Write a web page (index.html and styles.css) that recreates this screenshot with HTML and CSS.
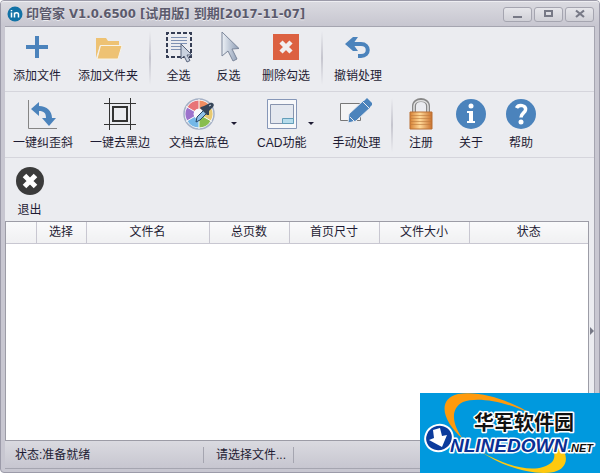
FILE: index.html
```html
<!DOCTYPE html>
<html lang="zh-CN">
<head>
    <meta charset="UTF-8">
    <meta name="viewport" content="width=device-width, initial-scale=1.0">
    <title>印管家</title>
    <link rel="stylesheet" href="styles.css">
</head>
<body>
    <div class="window">
        <header class="titlebar">
            <svg class="app-icon" width="16" height="16" viewBox="0 0 16 16">
                <circle cx="8" cy="8" r="7.5" fill="#1272a6"/>
                <path d="M4.500 6.500v5M4.500 4v1.300M7.500 11.500v-5M7.500 8.500c0-2.400 4-2.400 4 0v3" fill="none" stroke="#fff" stroke-width="1.500"/>
            </svg>
            <h1>印管家 V1.0.6500 [试用版] 到期[2017-11-07]</h1>
            <div class="window-buttons">
                <button type="button" aria-label="最小化"><svg width="10" height="10"><path d="M0 7h9v2H0z" fill="#777986"/></svg></button>
                <button type="button" aria-label="最大化"><svg width="10" height="10"><path d="M1 2h7v5H1z" fill="none" stroke="#777986" stroke-width="2"/></svg></button>
                <button type="button" aria-label="关闭"><svg width="10" height="10"><path d="M1 1.500l8 6.500M9 1.500L1 8" fill="none" stroke="#777986" stroke-width="2.200"/></svg></button>
            </div>
        </header>

        <main class="content">
            <nav class="toolbar">
                <!-- files and selection -->
                <div class="tool-row">
                    <button type="button" class="tool">
                        <svg width="32" height="32" viewBox="0 0 32 32"><path d="M14 5h4v9h9v4h-9v9h-4v-9H5v-4h9z" fill="#4b83bc"/></svg>
                        <span>添加文件</span>
                    </button>
                    <button type="button" class="tool">
                        <svg width="32" height="32" viewBox="0 0 32 32">
                            <path d="M4 7h10l2 3h11v4H8L4 27z" fill="#eec273"/>
                            <path d="M8.500 14.500H30L26 28H5z" fill="#eec273" stroke="#f7f3e8"/>
                        </svg>
                        <span>添加文件夹</span>
                    </button>
                    <i class="tool-sep"></i>
                    <button type="button" class="tool">
                        <svg width="32" height="32" viewBox="0 0 32 32">
                            <path d="M4 2h24v24H4z" fill="none" stroke="#353d54" stroke-width="2" stroke-dasharray="4 2" stroke-dashoffset="2"/>
                            <path d="M8 6.500h16M8 9.500h16M8 12.500h16M8 15.500h11M8 18.500h10" stroke="#7e91b3"/>
                            <path d="M18 13v15l3-3 3 6 3-1.500-3-5.500h5z" fill="#c9d2e0" stroke="#59647c"/>
                        </svg>
                        <span>全选</span>
                    </button>
                    <button type="button" class="tool">
                        <svg width="32" height="32" viewBox="0 0 32 32">
                            <defs><linearGradient id="cursorFill"><stop stop-color="#edf1f6"/><stop offset="1" stop-color="#8b9bb4"/></linearGradient></defs>
                            <path d="M9 1v24l6-5 5 10 4-2-5-10 7-.5z" fill="url(#cursorFill)" stroke="#7c879b"/>
                        </svg>
                        <span>反选</span>
                    </button>
                    <button type="button" class="tool">
                        <svg width="32" height="32" viewBox="0 0 32 32">
                            <path d="M3 3h26v26H3z" fill="#dc6141"/>
                            <path d="M11 11l10 10M21 11L11 21" stroke="#f1eff0" stroke-width="4.500"/>
                        </svg>
                        <span>删除勾选</span>
                    </button>
                    <i class="tool-sep"></i>
                    <button type="button" class="tool">
                        <svg width="32" height="32" viewBox="0 0 32 32">
                            <path d="M7 13h12c9 0 9 12 0 12h-3" fill="none" stroke="#4b83bc" stroke-width="4"/>
                            <path d="M3 13l8-7h5l-5 7 5 7h-5z" fill="#4b83bc"/>
                        </svg>
                        <span>撤销处理</span>
                    </button>
                </div>

                <!-- page processing -->
                <div class="tool-row tool-row-process">
                    <button type="button" class="tool">
                        <svg width="32" height="32" viewBox="0 0 32 32">
                            <path d="M1.500 2v28.500H30" fill="none" stroke="#858585"/>
                            <path d="M4 11l8-7v4c8 0 13 5 13 12h4l-7 8-7-8h4c0-5-2-7-7-7v5z" fill="#4b83bc"/>
                        </svg>
                        <span>一键纠歪斜</span>
                    </button>
                    <button type="button" class="tool">
                        <svg width="32" height="32" viewBox="0 0 32 32">
                            <path d="M5.500 0v32M26.500 0v32M0 5.500h32M0 26.500h32" stroke="#333"/>
                            <path d="M9 9h14v14H9z" fill="none" stroke="#333" stroke-width="2"/>
                        </svg>
                        <span>一键去黑边</span>
                    </button>
                    <button type="button" class="tool split">
                        <svg width="32" height="32" viewBox="0 0 32 32">
                            <circle cx="16" cy="16" r="15" fill="#f8f9fb" stroke="#a5b1c6" stroke-width="1.500"/>
                            <g fill="none" stroke-width="8">
                                <path d="M7.800 11.250A9.500 9.500 0 0 1 16 6.500" stroke="#e87578"/>
                                <path d="M16 6.500a9.500 9.500 0 0 1 8.200 4.750" stroke="#ef8d62"/>
                                <path d="M24.200 11.250a9.500 9.500 0 0 1 0 9.500" stroke="#e8c96f"/>
                                <path d="M24.200 20.750A9.500 9.500 0 0 1 16 25.500" stroke="#88bd4d"/>
                                <path d="M16 25.500a9.500 9.500 0 0 1-8.200-4.750" stroke="#74b8e8"/>
                                <path d="M7.800 20.750a9.500 9.500 0 0 1 0-9.500" stroke="#9d73cc"/>
                            </g>
                            <path d="M16 1v30M3 8.500l26 15M29 8.500l-26 15" stroke="#f8f9fb"/>
                            <circle cx="16" cy="16" r="5" fill="#f8f9fb"/>
                            <path d="M13 24l1-5 8-8 3 3-8 8z" fill="#8fc0e6" stroke="#244563"/>
                            <path d="M18 9l3-1 6-3c3-1 5 2 3 4l-4 4v4h-2l-7-7z" fill="#354458"/>
                            <path d="M26 8l2-1" stroke="#cbd5e0"/>
                        </svg>
                        <span>文档去底色</span>
                    </button>
                    <button type="button" class="tool split">
                        <svg width="32" height="32" viewBox="0 0 32 32">
                            <path d="M1.500 1.500h29v29h-29z" fill="#f7f8fa" stroke="#8697b8"/>
                            <path d="M4.500 6.500h23v19h-23z" fill="#e4e8ef" stroke="#8794ae"/>
                            <path d="M16.500 20.500h11v5h-11z" fill="#b6dcec" stroke="#649eb9"/>
                        </svg>
                        <span>CAD功能</span>
                    </button>
                    <button type="button" class="tool">
                        <svg width="32" height="32" viewBox="0 0 32 32">
                            <path d="M.5 5.500h20v17H.5z" fill="#f4f4f5" stroke="#777"/>
                            <path d="M8 25l1-9L24 2l7 7-15 14z" fill="#4b83bc" stroke="#ebecf0"/>
                            <path d="M24 3l3-3 6 6-3 3z" fill="#4b83bc"/>
                            <path d="M23 4l6 6" stroke="#ebecf0"/>
                            <path d="M10 19l4 4" stroke="#ebecf0"/>
                        </svg>
                        <span>手动处理</span>
                    </button>
                    <i class="tool-sep"></i>
                    <button type="button" class="tool">
                        <svg width="32" height="32" viewBox="0 0 32 32">
                            <defs><linearGradient id="lockFill"><stop stop-color="#d78235"/><stop offset=".45" stop-color="#ffd998"/><stop offset="1" stop-color="#ca702d"/></linearGradient></defs>
                            <path d="M9 17V8c0-8 14-8 14 0v9" fill="none" stroke="#888" stroke-width="4"/>
                            <path d="M9 17V8c0-7 14-7 14 0v9" fill="none" stroke="#e2e2e2" stroke-width="1.500"/>
                            <path d="M5 14h22v17H5z" fill="url(#lockFill)" stroke="#b97134"/>
                            <path d="M6 17.500h20M6 20.500h20M6 23.500h20M6 26.500h20" stroke="#bd7a3d" opacity=".6"/>
                        </svg>
                        <span>注册</span>
                    </button>
                    <button type="button" class="tool">
                        <svg width="32" height="32" viewBox="0 0 32 32">
                            <circle cx="16" cy="16" r="15" fill="#4b83bc"/>
                            <circle cx="16" cy="8" r="2.500" fill="#fff"/>
                            <path d="M12 13h6v10h2v2h-8v-2h2v-8h-2z" fill="#fff"/>
                        </svg>
                        <span>关于</span>
                    </button>
                    <button type="button" class="tool">
                        <svg width="32" height="32" viewBox="0 0 32 32">
                            <circle cx="16" cy="16" r="15" fill="#4b83bc"/>
                            <path d="M11.500 10c2-4 10-3 9 2-.5 3-4.500 3-4.500 7.500" fill="none" stroke="#fff" stroke-width="3.500"/>
                            <circle cx="16" cy="24" r="2.500" fill="#fff"/>
                        </svg>
                        <span>帮助</span>
                    </button>
                </div>

                <div class="tool-row tool-row-exit">
                    <button type="button" class="tool">
                        <svg width="32" height="32" viewBox="0 0 32 32">
                            <circle cx="16" cy="16" r="14" fill="#3b3b3b"/>
                            <path d="M10.500 10.500l11 11M21.500 10.500l-11 11" stroke="#fff" stroke-width="5"/>
                        </svg>
                        <span>退出</span>
                    </button>
                </div>
            </nav>

            <div class="workspace">
                <div class="file-list">
                    <table>
                        <colgroup>
                            <col class="col-mark"><col class="col-check"><col class="col-name"><col class="col-pages"><col class="col-size"><col class="col-size"><col>
                        </colgroup>
                        <thead>
                            <tr>
                                <th></th>
                                <th>选择</th>
                                <th>文件名</th>
                                <th>总页数</th>
                                <th>首页尺寸</th>
                                <th>文件大小</th>
                                <th>状态</th>
                            </tr>
                        </thead>
                        <tbody></tbody>
                    </table>
                </div>
                <div class="splitter"><svg width="4" height="8"><path d="M0 0l4 4-4 4z" fill="#777986"/></svg></div>
            </div>

            <footer class="statusbar">
                <span class="status-main">状态:准备就绪</span>
                <span class="status-file">请选择文件...</span>
            </footer>
        </main>
    </div>

    <div class="site-badge">
        <svg width="180" height="80" viewBox="0 0 180 80">
            <path d="M43 46C22 28 17 6 38 1c24-4 55 8 75 21C88 9 58 3 43 9 29 16 33 33 43 46z" fill="#ff9a0c"/>
            <path d="M60 58c22 13 47 21 63 16 14-4 13-13 8-22h10c9 14 5 24-7 27-20 4-52-5-74-21z" fill="#ffc90e"/>
            <text class="badge-cn" x="54" y="37">华军软件园</text>
            <text class="badge-en" x="30" y="59">NLINEDOWN</text>
            <text class="badge-net" x="148" y="59">.NET</text>
            <ellipse cx="19" cy="45" rx="14" ry="13" fill="#0b3b9c" stroke="#fff" stroke-width="2" transform="rotate(-25 19 45)"/>
            <path d="M13 37l7-2 2 8 5-1-5 12-13-7 5-2z" fill="#fff"/>
        </svg>
    </div>
</body>
</html>
```
FILE: styles.css
```css
* {
    box-sizing: border-box;
}

body {
    margin: 0;
    background-color: #fff;
    color: #1e1b33;
    font-family: "Liberation Sans", "Noto Sans CJK SC", sans-serif;
    font-size: 12px;
    line-height: 16px;
}

button {
    margin: 0;
    border: none;
    background: none;
    color: inherit;
    font: inherit;
}

svg {
    display: block;
}

/* Window frame */
.window {
    display: flex;
    flex-direction: column;
    height: 100vh;
    padding: 0 4px 3px;
    border: 1px solid #9c9ba9;
    border-radius: 4px;
    background-color: #c8c7d1;
}

.titlebar {
    display: flex;
    align-items: center;
    height: 25px;
    margin: 0 -4px;
    padding: 0 5px 0 6px;
    border-top: 1px solid #eeeef2;
    border-radius: 3px 3px 0 0;
    background: linear-gradient(#dadae0, #c7c6d0);
}

.titlebar h1 {
    flex: 1;
    margin: 0 0 0 3px;
    color: #5b5a6c;
    font-family: "DejaVu Sans Condensed", "Noto Sans CJK SC", sans-serif;
    font-size: 13px;
    font-weight: bold;
    text-shadow: 0 1px 0 #ebebf0;
    white-space: nowrap;
}

.window-buttons {
    display: flex;
    gap: 2px;
}

.window-buttons button {
    display: flex;
    justify-content: center;
    align-items: center;
    width: 29px;
    height: 15px;
    padding: 0;
    border: 1px solid #a5a5b0;
    border-radius: 3px;
    background: linear-gradient(#e6e6ea, #d0d0d7);
}

.content {
    display: flex;
    flex: 1;
    flex-direction: column;
    border: 1px solid #a5a5b0;
    border-left: none;
    background-color: #ebecf0;
}

/* Toolbar */
.tool-row {
    display: flex;
    gap: 1px;
    height: 65px;
    padding-top: 4px;
    border-bottom: 1px solid #d5d5dc;
}

.tool-row-process {
    height: 66px;
    padding-top: 6px;
}

.tool-row-exit {
    height: 63px;
    padding-top: 7px;
    border-bottom: none;
}

.tool {
    position: relative;
    display: flex;
    flex-direction: column;
    align-items: center;
    gap: 5px;
    min-width: 49px;
    padding: 0 8px;
    white-space: nowrap;
}

.tool:hover {
    background-color: #dfe3ec;
}

.split {
    padding: 0 17px 0 10px;
}

.split::after {
    content: "";
    position: absolute;
    right: 9px;
    top: 24px;
    border: 3px solid transparent;
    border-top-color: #1e1b33;
    border-bottom: none;
}

.tool-sep {
    width: 2px;
    height: 54px;
    margin: 0 2px;
    background: linear-gradient(#ebecf0, #c5c5ce, #ebecf0);
}

/* File list */
.workspace {
    display: flex;
    flex: 1;
}

.file-list {
    flex: 1;
    border: 1px solid #9c9ca6;
    background-color: #fff;
}

table {
    width: 100%;
    border-collapse: collapse;
    table-layout: fixed;
}

th {
    height: 21px;
    padding: 0;
    border-right: 1px solid #c8c7d1;
    border-bottom: 1px solid #c8c7d1;
    background: linear-gradient(#f9fafb, #f0f0f2);
    font-weight: normal;
}

th:last-child {
    border-right: none;
}

.col-mark {
    width: 30px;
}

.col-check {
    width: 50px;
}

.col-name {
    width: 123px;
}

.col-pages {
    width: 80px;
}

.col-size {
    width: 90px;
}

.splitter {
    display: flex;
    align-items: center;
    width: 5px;
    padding-left: 1px;
}

.statusbar {
    display: flex;
    align-items: center;
    height: 27px;
    padding-left: 10px;
    background: linear-gradient(#dadae0, #c7c6d0);
}

.status-main,
.status-file {
    border-right: 1px solid #a5a5b0;
}

.status-main {
    width: 189px;
}

.status-file {
    width: 90px;
    padding-left: 12px;
}

/* Download site badge */
.site-badge {
    position: absolute;
    right: 0;
    bottom: 0;
    background-color: #0099de;
}

.site-badge text {
    stroke: #fff;
    stroke-width: 3px;
    stroke-linejoin: round;
    paint-order: stroke;
    font-weight: bold;
}

.badge-cn {
    fill: #111;
    font-family: "Noto Sans CJK SC", sans-serif;
    font-size: 20px;
}

.badge-en {
    fill: #0b2f94;
    font-size: 19px;
    font-style: italic;
}

.badge-net {
    fill: #111;
    font-size: 11px;
    font-style: italic;
}
```
